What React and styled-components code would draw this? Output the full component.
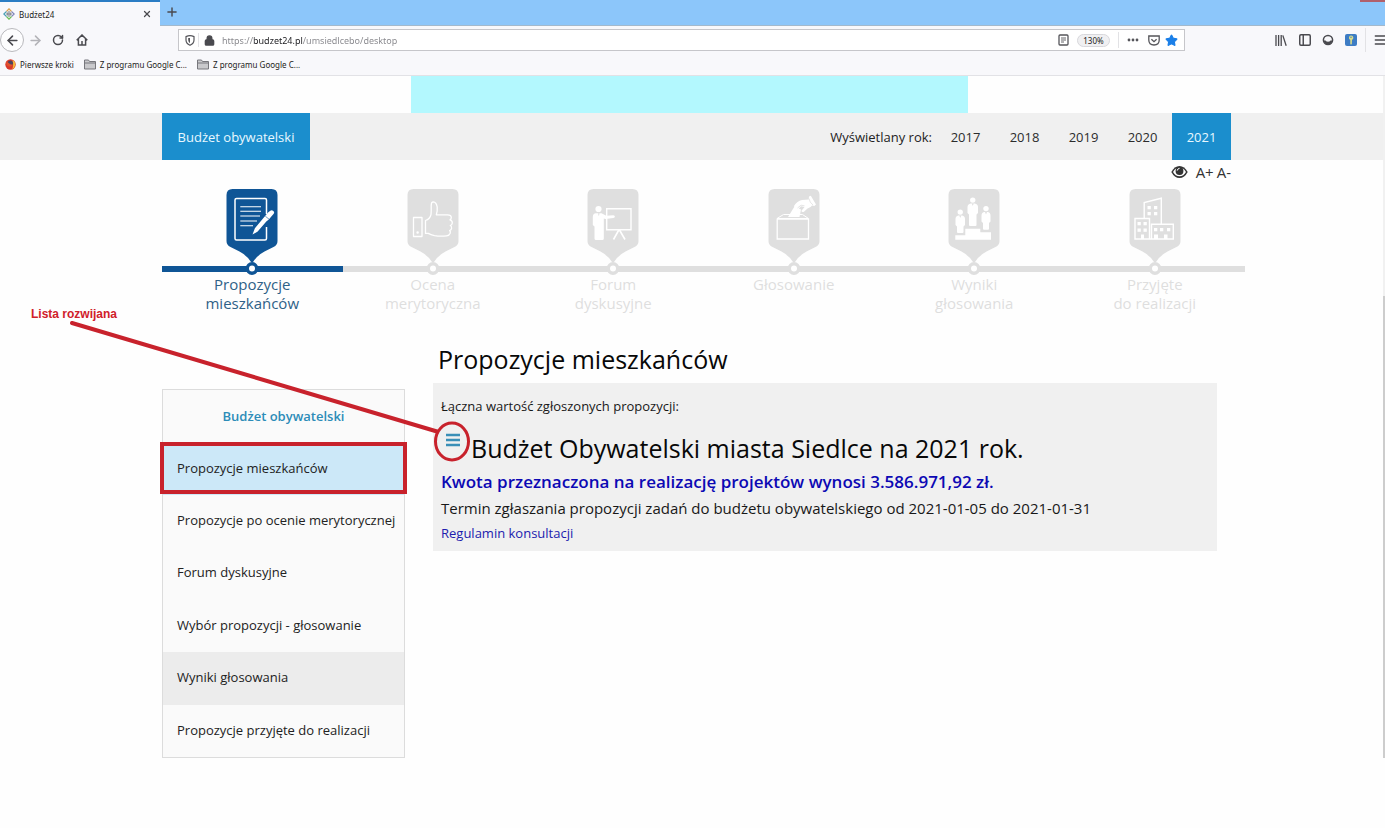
import React from "react";
import styled, { createGlobalStyle, css } from "styled-components";
import { X, Plus, ArrowLeft, ArrowRight, RotateCw, Lock, Star, Menu, PanelLeft } from "lucide-react";

const Global = createGlobalStyle`
  * { box-sizing: border-box; }
  body {
    margin: 0;
    background: #fefefe;
    color: #222;
    font-family: "Open Sans", "Noto Sans", sans-serif;
    font-size: 13px;
  }
  button, input { font: inherit; color: inherit; }
  h1, h2, p, ul, ol { margin: 0; padding: 0; font-weight: 400; }
  ul, ol { list-style: none; }
  a { color: inherit; text-decoration: none; }
`;

/* ---------- browser frame ---------- */

const Chrome = styled.header`
  background: #f8f8fb;
  border-bottom: 1px solid #e2e2e6;
  font-family: "Noto Sans", "Open Sans", sans-serif;
  font-size: 8px;
  color: #1c1c20;
`;

const TabStrip = styled.div`
  display: flex;
  height: 26px;
  background: #8cc6fa;
  border-bottom: 1px solid #a3b9cc;
`;

const Tab = styled.div`
  display: flex;
  align-items: center;
  gap: 4px;
  width: 160px;
  height: 26px;
  padding: 0 8px 0 3px;
  background: #f8f8fb;
  border-top: 2px solid #2b7dc4;
`;

const TabTitle = styled.span`
  flex: 1;
`;

const WindowClose = styled.button`
  width: 25px;
  height: 2px;
  margin-left: auto;
  padding: 0;
  border: 0;
  background: #b0606c;
`;

const IconButton = styled.button`
  display: flex;
  align-items: center;
  justify-content: center;
  flex: none;
  width: ${(p) => p.$w || 24}px;
  height: 24px;
  padding: 0;
  border: 0;
  background: none;
  color: ${(p) => p.$color || "#4a4a4f"};
  ${(p) =>
    p.$round &&
    css`
      border: 1px solid #b9b9bd;
      border-radius: 50%;
      background: #fdfdfe;
    `}
`;

const NavBar = styled.div`
  display: flex;
  align-items: center;
  height: 28px;
  overflow: hidden;
`;

const NavGroup = styled.div`
  display: flex;
  align-items: center;
  flex: none;
`;

const ToolGroup = styled(NavGroup)`
  margin-right: -7px;
`;

const UrlBar = styled.div`
  display: flex;
  align-items: center;
  flex: 1;
  height: 22px;
  margin: 0 84px;
  padding: 0 3px;
  background: #fff;
  border: 1px solid #c6c6ca;
`;

const UrlInput = styled.input`
  flex: 1;
  min-width: 0;
  height: 20px;
  margin-left: 3px;
  padding: 0;
  border: 0;
  outline: 0;
  font-size: 9px;
  color: transparent;
  background: linear-gradient(90deg, #85858a 32px, #1b1b1f 32px, #1b1b1f 81px, #85858a 81px);
  background-clip: text;
`;

const Zoom = styled.button`
  width: 33px;
  height: 13px;
  margin: 0 8px 0 6px;
  padding: 0;
  border: 1px solid #d8d8dc;
  border-radius: 7px;
  background: #f0f0f2;
  font-size: 8px;
  line-height: 11px;
`;

const Divider = styled.span`
  width: 1px;
  height: ${(p) => p.$h}px;
  margin: 0 ${(p) => p.$gap || 0}px;
  background: #e2e2e5;
`;

const Bookmarks = styled.nav`
  display: flex;
  align-items: center;
  gap: 10px;
  height: 21px;
  padding-left: 5px;
`;

const Bookmark = styled.a`
  display: flex;
  align-items: center;
  gap: 4px;
  font-size: 8px;
`;

/* ---------- page ---------- */

const Page = styled.div`
  position: relative;
`;

const ScrollBar = styled.div`
  position: absolute;
  top: 0;
  right: 0;
  width: 2px;
  height: 752px;
  padding-top: 220px;
  background: #f1f1f1;
`;

const ScrollThumb = styled.div`
  height: 468px;
  background: #cdcdcd;
`;

const Banner = styled.div`
  height: 37px;
  margin: 0 417px 0 411px;
  background: #b3f8fe;
`;

const MenuBar = styled.nav`
  display: flex;
  align-items: stretch;
  height: 47px;
  margin-right: 2px;
  padding: 0 152px 0 162px;
  background: #f0f0f0;
  font-size: 13px;
`;

const MenuLink = styled.a`
  display: flex;
  align-items: center;
  justify-content: center;
  width: ${(p) => p.$w}px;
  color: ${(p) => (p.$active ? "#e8f8ff" : "#2c2c2c")};
  background: ${(p) => (p.$active ? "#1b8ecd" : "transparent")};
`;

const YearLabel = styled.span`
  align-self: center;
  margin-left: auto;
  margin-right: 4px;
`;

const Access = styled.div`
  display: flex;
  justify-content: flex-end;
  align-items: center;
  gap: 3px;
  height: 24px;
  padding-right: 154px;
`;

const AccessButton = styled.button`
  display: flex;
  padding: 0;
  border: 0;
  background: none;
  font-size: 15px;
  line-height: 20px;
  color: #333;
  &:first-child { margin-right: 5px; }
`;

const Steps = styled.ol`
  display: grid;
  grid-template-columns: repeat(6, 1fr);
  margin: 5px 140px 0 162px;
`;

const Step = styled.li`
  display: flex;
  flex-direction: column;
  align-items: center;
  height: 126px;
  background: linear-gradient(${(p) => p.$tone}, ${(p) => p.$tone}) 0 77px / 100% 6px no-repeat;
  color: ${(p) => (p.$active ? "#2f6187" : "#dedede")};
  font-size: 15px;
  line-height: 19px;
  text-align: center;
  white-space: pre-line;
`;

const Columns = styled.div`
  display: flex;
  align-items: flex-start;
  margin: 26px 168px 0 162px;
`;

const Sidebar = styled.nav`
  display: grid;
  grid-auto-rows: 1fr;
  flex: none;
  width: 243px;
  height: 369px;
  margin: 48px 28px 0 0;
  background: #fafafa;
  border: 1px solid #dcdcdc;
  font-size: 13px;
`;

const SideTitle = styled.h2`
  display: flex;
  align-items: center;
  justify-content: center;
  font-size: 13px;
  font-weight: 600;
  color: #2c8cb8;
`;

const SideLink = styled.a`
  position: relative;
  display: flex;
  align-items: center;
  padding: 0 0 2px 14px;
  white-space: nowrap;
  background: ${(p) => (p.$current ? "#cce8f8" : p.$hovered ? "#ececec" : "transparent")};
  ${(p) =>
    p.$current &&
    css`
      &::after {
        content: "";
        position: absolute;
        inset: 0 -3px 1px;
        border: 4px solid #c8222c;
      }
    `}
`;

const Main = styled.main`
  flex: 1;
  min-width: 0;
`;

const Title = styled.h1`
  height: 42px;
  padding-left: 5px;
  font-size: 25px;
  line-height: 36px;
  color: #080808;
`;

const Panel = styled.section`
  padding: 11px 8px 5px;
  background: #f0f0f0;
  color: #181818;
`;

const Sum = styled.p`
  font-size: 13px;
  line-height: 24px;
`;

const BudgetRow = styled.div`
  display: flex;
  height: 51px;
`;

const ListButton = styled.button`
  display: flex;
  width: 24px;
  height: 18px;
  margin: 13px 6px 0 0;
  padding: 0;
  border: 0;
  background: none;
  justify-content: center;
  align-items: center;
`;

const BudgetTitle = styled.h2`
  padding-top: 10px;
  font-size: 25px;
  line-height: 40px;
  color: #080808;
`;

const Amount = styled.p`
  font-size: 17px;
  font-weight: 600;
  line-height: 26px;
  color: #0c08b4;
`;

const Term = styled.p`
  font-size: 15px;
  line-height: 26px;
`;

const Rules = styled.a`
  display: block;
  font-size: 13px;
  line-height: 25px;
  color: #211cae;
`;

const Note = styled.div`
  position: absolute;
  left: 31px;
  top: 230px;
  color: #d0202a;
  font: 700 12px/16px "Liberation Sans", Arial, sans-serif;
`;

const NoteArrow = styled.svg`
  position: absolute;
  left: 60px;
  top: 240px;
  pointer-events: none;
`;

/* ---------- drawings ---------- */

const Favicon = () => (
  <svg width="12" height="12" viewBox="0 0 12 12" fill="none" strokeWidth="1.2">
    <path d="M3.5 3.500 6 .8 8.500 3.500" stroke="#d9a352" />
    <path d="M8.500 3.500 11.200 6 8.500 8.500" stroke="#7f86b8" />
    <path d="M3.500 8.500 6 11.200 8.500 8.500" stroke="#6fbf58" />
    <path d="M3.500 3.500.8 6 3.500 8.500" stroke="#4a9fb4" />
    <path d="M6 3v6M3 6h6M4.500 4.500v3M7.500 4.500v3" stroke="#8d8f95" />
  </svg>
);

const Home = () => (
  <svg width="12" height="12" viewBox="0 0 12 12" fill="none" stroke="currentColor" strokeWidth="1.5">
    <path d="M.7 6.2 6 1l5.3 5.2M2.4 5v6h7.2V5M6 7v4" />
  </svg>
);

const Shield = () => (
  <svg width="10" height="11" viewBox="0 0 10 11" fill="none" stroke="#55555a">
    <path d="M1 1.6Q5-.2 9 1.6V5q0 3.6-4 5.3Q1 8.600 1 5Z" strokeWidth="1.2" />
    <path d="M5 3v5.200Q3.200 7 3.200 5V3Z" fill="#55555a" stroke="none" />
  </svg>
);

const Reader = () => (
  <svg width="11" height="12" viewBox="0 0 11 12" fill="none" stroke="#55555a">
    <rect x="1" y="1" width="9" height="10" rx="1" strokeWidth="1.300" />
    <path d="M3 4h5M3 6h5M3 8h3" strokeWidth=".9" />
  </svg>
);

const Dots = () => (
  <svg width="12" height="4" viewBox="0 0 12 4" fill="#55555a">
    <circle cx="2" cy="2" r="1.400" /><circle cx="6" cy="2" r="1.400" /><circle cx="10" cy="2" r="1.400" />
  </svg>
);

const Pocket = () => (
  <svg width="12" height="11" viewBox="0 0 12 11" fill="none" stroke="#55555a" strokeWidth="1.300">
    <path d="M.8 1h10.400v4q0 5-5.200 5T.8 5Z" /><path d="m3.400 4.200 2.600 2.500 2.600-2.500" />
  </svg>
);

const Library = () => (
  <svg width="12" height="11" viewBox="0 0 12 11" fill="none" stroke="currentColor" strokeWidth="1.300">
    <path d="M1 0v11M3.600 0v11M6.200 0v11M7.800.4l3.400 10.400" />
  </svg>
);

const Account = () => (
  <svg width="12" height="12" viewBox="0 0 12 12">
    <path d="M1.500 6.500h9Q10 10.500 6 10.500T1.500 6.500Z" fill="currentColor" />
    <circle cx="6" cy="5.300" r="2.500" fill="#f8f8fb" />
    <circle cx="6" cy="6" r="4.600" fill="none" stroke="currentColor" strokeWidth="1.500" />
  </svg>
);

const KeyBadge = () => (
  <svg width="12" height="12" viewBox="0 0 12 12">
    <rect width="12" height="12" rx="2" fill="#3d7cc4" />
    <path d="M6 1.500a2.300 2.300 0 0 1 1 4.400L6.800 10 6 10.800 5.300 10V5.900A2.300 2.300 0 0 1 6 1.500Z" fill="#d8dc8a" />
    <circle cx="6" cy="3.300" r=".7" fill="#3d7cc4" />
  </svg>
);

const Firefox = () => (
  <svg width="11" height="11" viewBox="0 0 11 11">
    <circle cx="5.500" cy="5.500" r="5.200" fill="#d9382b" />
    <circle cx="5.400" cy="4" r="2.600" fill="#4b4560" />
    <path d="M1 2.500Q3 3 5 5q2 1 3 0-1 3-4 2.500Q1 7 1 2.500Z" fill="#e2502c" />
    <path d="M7.500 1q3.300 2 2.800 5T7 10.500q2-3.500.5-9.500Z" fill="#f3b83c" />
  </svg>
);

const Folder = () => (
  <svg width="12" height="11" viewBox="0 0 12 11" fill="#c9c9cc" stroke="#77777c">
    <path d="M.5 10V1h4l1 1.500h6V10Z" /><path d="M.5 4h11" />
  </svg>
);

const Eye = () => (
  <svg width="17" height="14" viewBox="0 0 17 14">
    <path d="M.3 7Q3.500 1 8.500 1t8.200 6Q13.500 13 8.500 13T.3 7Z" fill="#333" />
    <path d="M2 7q1.500-2.800 3.400-3.800Q4.600 4.500 4.600 6q0 3.800 3.900 4t3.900-4q0-1.500-.8-2.800Q13.500 4.200 15 7q-2.300 4.200-6.500 4.300Q4.300 11.200 2 7Z" fill="#fefefe" />
    <path d="M6.200 5.600Q6.500 3.500 8.600 3.300" fill="none" stroke="#fefefe" strokeWidth="1" />
  </svg>
);

const person = (x, top, w, bottom) => {
  const c = x + w / 2;
  return (
    <g fill="#fff" key={x}>
      <circle cx={c} cy={top + 2.600} r="2.700" />
      <path
        d={`M${c - 2} ${top + 6}h4q${w / 2 - 2} .5 ${w / 2 - 2} 3.500v6l-1.500 1.500V${bottom - 1}q0 1-1 1h${-(w - 5)}q-1 0-1-1V${top + 17}l-1.500-1.500v-6q0-3 ${w / 2 - 2}-3.500Z`}
      />
      <path d={`m${c - 1} ${top + 6} 1 2.500 1-2.500Z`} fill="#dfdfdf" />
    </g>
  );
};

const glyphs = {
  paper: (
    <>
      <g fill="none" stroke="#fff">
        <path d="M40.500 25V11q0-1.500-1.500-1.500H10.500Q9 9.500 9 11v38.500q0 1.500 1.500 1.500H39q1.500 0 1.500-1.500V38" strokeWidth="1.500" />
        <path d="M14.300 17.800H35M14.300 22.300H35M14.300 27H34M14.300 32H31M14.300 36.700H27" strokeWidth="1.100" />
      </g>
      <path d="m26.500 45.500 2.400-6.300L42 23.600l2.300-1.800q1.500-1 3 .2t.4 2.800l-4.900 5.600-2.500 2-8.600 10.200Z" fill="#fff" />
      <path d="m39.300 27.200 4.500 3.600" stroke="#0d5697" strokeWidth=".6" />
    </>
  ),
  thumb: (
    <g fill="none" stroke="#fff" strokeWidth="1.300" strokeLinejoin="round">
      <path d="M6.500 28.500H15V47.500H6.500Z" />
      <circle cx="10.600" cy="43.500" r=".6" />
      <path d="M18.500 31.500q4.500-1.500 5.500-6 .3-3 .2-9 0-3.600 2-3.600 3.200.2 4 5.100.4 4-.9 7.800h11.200q3.700 0 3.800 2.700 0 1.500-1.300 2.300 2.500.8 2.300 3.200-.2 1.900-2 2.500 1.600.9 1.300 2.800-.3 1.700-2 2.200 1.200 1 .6 2.800-.8 2.200-3.700 2.500-6 .8-12-.2-4-.8-6.200-2.200H18.500Z" />
    </g>
  ),
  board: (
    <>
      <path d="M19.700 19.700H44V40.700H19.700Z" fill="none" stroke="#fff" strokeWidth="1.400" />
      <path d="M31.800 41 26.500 50.500M32.500 41 38 50.500" stroke="#fff" strokeWidth="1.600" />
      <circle cx="11.500" cy="20" r="3.100" fill="#fff" />
      <path d="M9 24.200h5.500l4.800 2.600 7-.6q1.700.3 1.600 1.300 0 1.300-1.600 1.500l-7.800 1-1.700-.6v20q0 1.500-1.500 1.500H9q-1.500 0-1.500-1.500V37.500L5.800 36v-8q0-3.500 3.200-3.800Z" fill="#fff" />
      <path d="m11 24.200.8 3 .8-3Z" fill="#dfdfdf" />
    </>
  ),
  vote: (
    <>
      <path d="M9.200 30.200H40.500V50H9.200Z" fill="none" stroke="#fff" strokeWidth="1.300" />
      <path d="M9 29.500 15.500 25.500H34.500L40.500 29.500Z" fill="none" stroke="#fff" strokeWidth="1" />
      <path d="M20 28 26.500 17.500l6.500 3L31.500 28Z" fill="#fff" />
      <path d="M26 17q3-5.200 8-6l7-.5 3.500 5.500q-2 3-5 3.500l-3.500 3.200q-2.500.7-2.500-1l3-3.700-3.500-.7-3 3.200q-3 .5-4-3.500Z" fill="#fff" />
      <path d="m41 7.500 1.800-.8L48 15.500l-1.700 1.500q-3-.3-4.600-2.800T41 7.500Z" fill="#fff" />
      <path d="m29.500 19 3.500-2.800 3.500.6M41 9.500q.5 4 4 6.500" fill="none" stroke="#dfdfdf" strokeWidth=".8" />
    </>
  ),
  podium: (
    <>
      {person(19.500, 8.500, 10.500, 37)}
      {person(7.500, 20.500, 9.500, 44)}
      {person(33.500, 17, 9, 40.700)}
      <path d="M7.300 50.700V46.300h10V39.700h15v3.600H43v7.400Z" fill="#fff" />
    </>
  ),
  city: (
    <>
      <g fill="none" stroke="#fff" strokeWidth="1.400">
        <path d="M6 50V29.500H20.500V50ZM15.200 29.500V13.500L32.300 9.200V35M22.500 50V35.300H44.300V50ZM6 50H44.500" />
      </g>
      <g fill="#fff">
        {[[18.500, 17], [25, 17], [18.500, 23], [25, 23], [8.500, 33], [14.500, 33], [8.500, 39.500], [14.500, 39.500], [25, 39], [31, 39], [38, 39]].map(([x, y]) => (
          <rect key={`${x}-${y}`} x={x} y={y} width="3.300" height="3.300" />
        ))}
        <path d="M12 45.500h3V50h-3ZM25 45.500h4V50h-4ZM35 45.500h3.500V50H35Z" />
      </g>
    </>
  ),
};

const Pin = ({ glyph, tone }) => (
  <svg width="52" height="86" viewBox="0 0 52 86">
    <path d="M6.500 0h39Q51.500 0 51.500 6v46q0 4-4 6l-9 4.500Q30.500 67 27 73h-2Q21.500 67 13.500 62.500L4.500 58q-4-2-4-6V6Q.5 0 6.500 0Z" fill={tone} />
    {glyphs[glyph]}
    <circle cx="26" cy="79.500" r="4.700" fill="#fff" stroke={tone} strokeWidth="3.400" />
  </svg>
);

const steps = [
  ["paper", "Propozycje\nmieszkańców"],
  ["thumb", "Ocena\nmerytoryczna"],
  ["board", "Forum\ndyskusyjne"],
  ["vote", "Głosowanie"],
  ["podium", "Wyniki\ngłosowania"],
  ["city", "Przyjęte\ndo realizacji"],
];

const sections = [
  "Propozycje mieszkańców",
  "Propozycje po ocenie merytorycznej",
  "Forum dyskusyjne",
  "Wybór propozycji - głosowanie",
  "Wyniki głosowania",
  "Propozycje przyjęte do realizacji",
];

const BrowserFrame = () => (
  <Chrome>
    <TabStrip>
      <Tab>
        <Favicon />
        <TabTitle>Budżet24</TabTitle>
        <IconButton $w={10} aria-label="Zamknij kartę"><X size={10} strokeWidth={3} /></IconButton>
      </Tab>
      <IconButton aria-label="Nowa karta"><Plus size={14} strokeWidth={2.500} /></IconButton>
      <WindowClose aria-label="Zamknij okno" />
    </TabStrip>
    <NavBar>
      <NavGroup>
        <IconButton $round aria-label="Wstecz"><ArrowLeft size={15} strokeWidth={2.500} /></IconButton>
        <IconButton $w={22} $color="#b3b3b8" aria-label="Dalej"><ArrowRight size={15} strokeWidth={2.500} /></IconButton>
        <IconButton aria-label="Odśwież"><RotateCw size={12} strokeWidth={3} /></IconButton>
        <IconButton aria-label="Strona startowa"><Home /></IconButton>
      </NavGroup>
      <UrlBar>
        <IconButton $w={16} aria-label="Ochrona"><Shield /></IconButton>
        <Divider $h={14} />
        <IconButton $w={20} aria-label="Połączenie"><Lock size={11} strokeWidth={3} fill="currentColor" /></IconButton>
        <UrlInput aria-label="Adres" defaultValue="https://budzet24.pl/umsiedlcebo/desktop" />
        <IconButton $w={16} aria-label="Widok do czytania"><Reader /></IconButton>
        <Zoom>130%</Zoom>
        <Divider $h={16} />
        <IconButton $w={28} aria-label="Więcej"><Dots /></IconButton>
        <IconButton $w={14} aria-label="Pocket"><Pocket /></IconButton>
        <IconButton $w={20} $color="#1a7fe8" aria-label="Zakładka"><Star size={13} fill="currentColor" /></IconButton>
      </UrlBar>
      <ToolGroup>
        <IconButton aria-label="Biblioteka"><Library /></IconButton>
        <IconButton aria-label="Panel boczny"><PanelLeft size={14} strokeWidth={2.500} /></IconButton>
        <IconButton $w={22} aria-label="Konto"><Account /></IconButton>
        <IconButton aria-label="Hasła"><KeyBadge /></IconButton>
        <Divider $h={24} $gap={2} />
        <IconButton aria-label="Menu"><Menu size={14} strokeWidth={2.500} /></IconButton>
      </ToolGroup>
    </NavBar>
    <Bookmarks>
      <Bookmark href="#"><Firefox />Pierwsze kroki</Bookmark>
      <Bookmark href="#"><Folder />Z programu Google C...</Bookmark>
      <Bookmark href="#"><Folder />Z programu Google C...</Bookmark>
    </Bookmarks>
  </Chrome>
);

export default function App() {
  return (
    <>
      <Global />
      <BrowserFrame />
      <Page>
        <Banner />
        <MenuBar>
          <MenuLink href="#" $w={148} $active>Budżet obywatelski</MenuLink>
          <YearLabel>Wyświetlany rok:</YearLabel>
          {[2017, 2018, 2019, 2020, 2021].map((y) => (
            <MenuLink key={y} href="#" $w={59} $active={y === 2021}>{y}</MenuLink>
          ))}
        </MenuBar>
        <Access>
          <AccessButton aria-label="Wysoki kontrast"><Eye /></AccessButton>
          <AccessButton>A+</AccessButton>
          <AccessButton>A-</AccessButton>
        </Access>
        <Steps>
          {steps.map(([glyph, label], i) => {
            const tone = i === 0 ? "#0f5596" : "#dfdfdf";
            return (
              <Step key={glyph} $tone={tone} $active={i === 0}>
                <Pin glyph={glyph} tone={tone} />
                {label}
              </Step>
            );
          })}
        </Steps>
        <Columns>
          <Sidebar>
            <SideTitle>Budżet obywatelski</SideTitle>
            {sections.map((s, i) => (
              <SideLink key={s} href="#" $current={i === 0} $hovered={i === 4}>{s}</SideLink>
            ))}
          </Sidebar>
          <Main>
            <Title>Propozycje mieszkańców</Title>
            <Panel>
              <Sum>Łączna wartość zgłoszonych propozycji:</Sum>
              <BudgetRow>
                <ListButton aria-label="Lista rozwijana">
                  <svg width="14" height="14" viewBox="0 0 14 14" stroke="#3a8fb7" strokeWidth="2.4">
                    <path d="M0 2h14M0 7h14M0 12h14" />
                  </svg>
                </ListButton>
                <BudgetTitle>Budżet Obywatelski miasta Siedlce na 2021 rok.</BudgetTitle>
              </BudgetRow>
              <Amount>Kwota przeznaczona na realizację projektów wynosi 3.586.971,92 zł.</Amount>
              <Term>Termin zgłaszania propozycji zadań do budżetu obywatelskiego od 2021-01-05 do 2021-01-31</Term>
              <Rules href="#">Regulamin konsultacji</Rules>
            </Panel>
          </Main>
        </Columns>
        <Note>Lista rozwijana</Note>
        <NoteArrow width="420" height="150" viewBox="60 316 420 150" fill="none" stroke="#c8222c">
          <path d="m72 323 365 108.500" strokeWidth="4" strokeLinecap="round" />
          <ellipse cx="452" cy="441.500" rx="16.500" ry="18.500" strokeWidth="3" />
        </NoteArrow>
        <ScrollBar><ScrollThumb /></ScrollBar>
      </Page>
    </>
  );
}
